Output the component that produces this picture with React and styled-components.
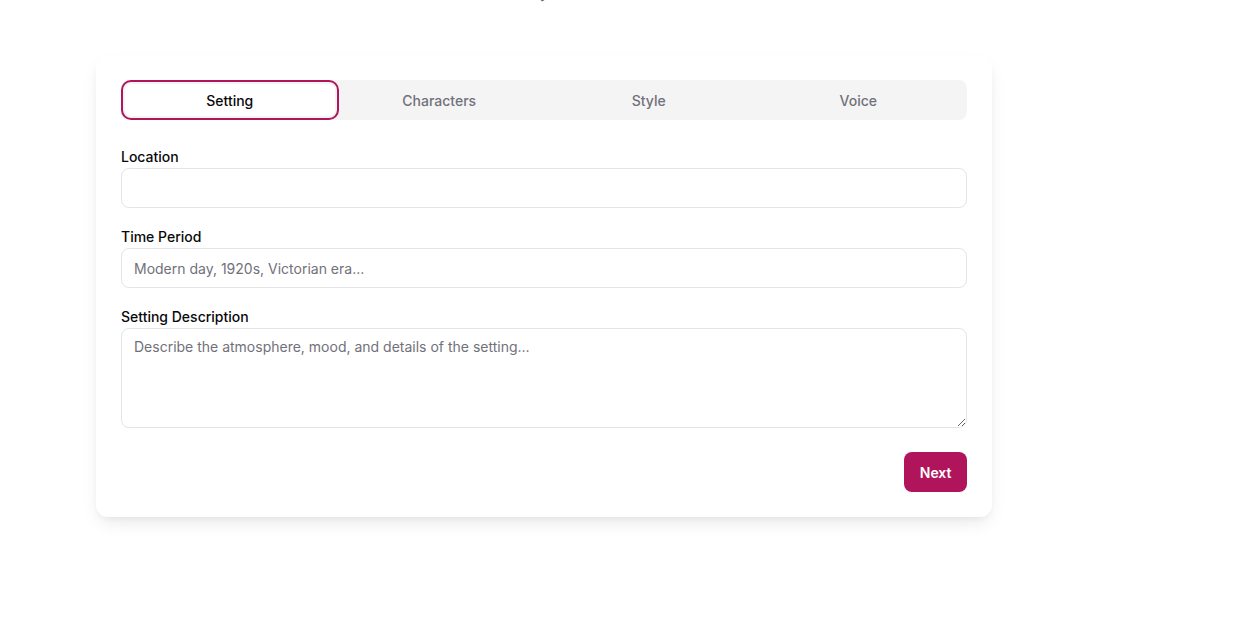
import React, { useState } from 'react'
import styled, { createGlobalStyle } from 'styled-components'

const GlobalStyle = createGlobalStyle`
  * { box-sizing: border-box; }
  html, body {
    margin: 0;
    padding: 0;
    background: #ffffff;
    font-family: Inter, "Noto Sans", sans-serif;
    color: #09090b;
  }
`

const ScPage = styled.div`
  padding: 0 0 80px 96px;
  width: 992px;
`

const ScIntro = styled.p`
  margin: -20px 0 0 0;
  height: 20px;
  text-align: center;
  font-size: 16px;
  line-height: 24px;
  color: #71717a;
`

const ScCard = styled.div`
  margin-top: 56px;
  background: #ffffff;
  border-radius: 12px;
  box-shadow: 0 8px 18px -4px rgba(0, 0, 0, 0.1), 0 3px 6px -2px rgba(0, 0, 0, 0.05);
  padding: 24px 25px 25px 25px;
`

const ScTabList = styled.div`
  display: grid;
  grid-template-columns: repeat(4, 1fr);
  padding: 4px;
  height: 40px;
  background: #f4f4f5;
  border-radius: 8px;
`

const ScTab = styled.button`
  border: 0;
  background: ${p => (p.active ? '#ffffff' : 'transparent')};
  color: ${p => (p.active ? '#09090b' : '#71717a')};
  font-family: inherit;
  font-size: 14px;
  font-weight: 500;
  border-radius: 6px;
  outline: ${p => (p.active ? '2px solid #b0145a' : 'none')};
  outline-offset: 2px;
  cursor: pointer;
`

const ScForm = styled.div`
  display: flex;
  flex-direction: column;
  gap: 19px;
  margin-top: 27px;
`

const ScField = styled.div`
  display: flex;
  flex-direction: column;
`

const ScLabel = styled.label`
  font-size: 14px;
  font-weight: 500;
  line-height: 20px;
  margin-bottom: 1px;
`

const ScInput = styled.input`
  height: 40px;
  border: 1px solid #e4e4e7;
  border-radius: 8px;
  padding: 0 12px;
  font-family: inherit;
  font-size: 14px;
  color: #09090b;
  background: #ffffff;
  outline: none;

  &::placeholder {
    color: #71717a;
  }
`

const ScTextarea = styled.textarea`
  height: 100px;
  border: 1px solid #e4e4e7;
  border-radius: 8px;
  padding: 8px 12px;
  font-family: inherit;
  font-size: 14px;
  line-height: 20px;
  color: #09090b;
  background: #ffffff;
  outline: none;
  resize: vertical;

  &::placeholder {
    color: #71717a;
  }
`

const ScActions = styled.div`
  display: flex;
  justify-content: flex-end;
  margin-top: 24px;
`

const ScButton = styled.button`
  height: 40px;
  padding: 0 15.5px;
  border: 0;
  border-radius: 8px;
  background: #b0145a;
  color: #ffffff;
  font-family: inherit;
  font-size: 14px;
  font-weight: 600;
  cursor: pointer;
`

const tabs = ['Setting', 'Characters', 'Style', 'Voice']

export default function App() {
  const [active, setActive] = useState('Setting')

  return (
    <>
      <GlobalStyle />
      <ScPage>
        <ScIntro>Describe your world</ScIntro>
        <ScCard>
          <ScTabList>
            {tabs.map(t => (
              <ScTab key={t} active={t === active} onClick={() => setActive(t)}>
                {t}
              </ScTab>
            ))}
          </ScTabList>

          <ScForm>
            <ScField>
              <ScLabel>Location</ScLabel>
              <ScInput />
            </ScField>
            <ScField>
              <ScLabel>Time Period</ScLabel>
              <ScInput placeholder="Modern day, 1920s, Victorian era..." />
            </ScField>
            <ScField>
              <ScLabel>Setting Description</ScLabel>
              <ScTextarea placeholder="Describe the atmosphere, mood, and details of the setting..." />
            </ScField>
          </ScForm>

          <ScActions>
            <ScButton>Next</ScButton>
          </ScActions>
        </ScCard>
      </ScPage>
    </>
  )
}
